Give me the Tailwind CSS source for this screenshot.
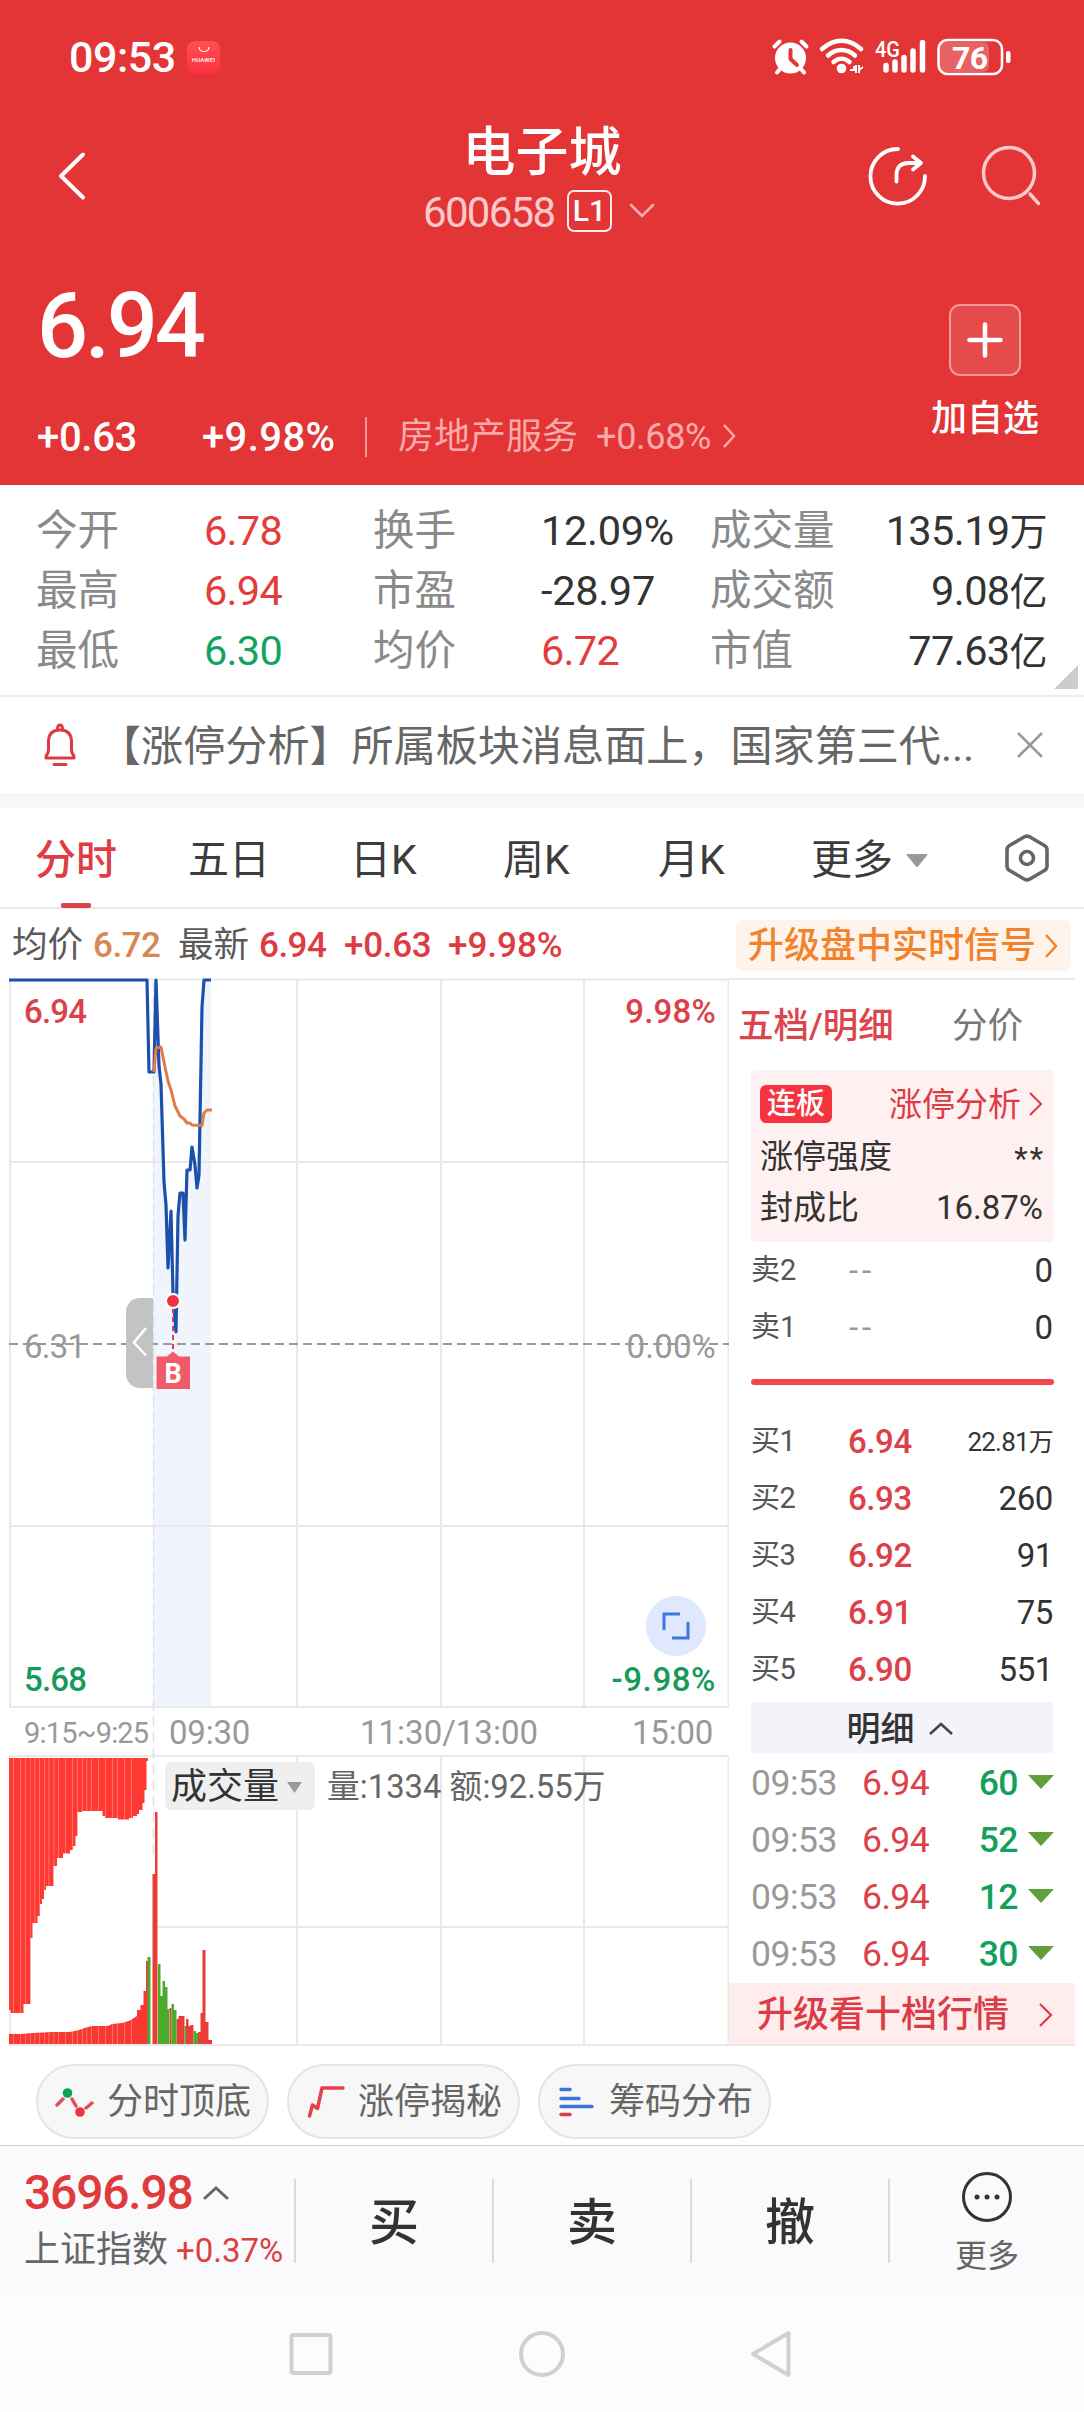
<!DOCTYPE html>
<html lang="zh-CN">
<head>
<meta charset="utf-8">
<title>电子城 600658</title>
<script src="https://cdn.jsdelivr.net/npm/@tailwindcss/browser@4"></script>
</head>
<body class="w-[1084px] h-[2412px] overflow-hidden bg-white leading-none whitespace-nowrap text-[#333] font-['Roboto','Noto_Sans_CJK_SC',sans-serif]">

<!-- Header -->
<header class="h-[485px] bg-[#e33536] text-white flex flex-col">
  <!-- Status bar -->
  <div class="h-[114px] flex items-center pl-[69px] pr-[71px]">
    <span class="text-[43px] tracking-[-0.5px] font-medium w-[118px] pt-[1px]">09:53</span>
    <span class="size-[33px] rounded-[8px] bg-linear-to-b from-[#ff5050] to-[#fb2f43] flex flex-col items-center pt-[5px]">
      <svg width="12" height="7" viewBox="0 0 12 7" fill="none" stroke="#fff" stroke-width="1.2"><path d="M1 1c0 6 10 6 10 0"/></svg>
      <span class="text-[6px] font-medium mt-[4px] tracking-[0.2px]">HUAWEI</span>
    </span>
    <svg class="ml-auto" width="242" height="40" viewBox="0 0 242 40">
      <g transform="translate(2 2)">
        <circle cx="17.500" cy="19" r="15.500" fill="#fff"/>
        <path d="M17.500 11v9l6.500 6" fill="none" stroke="#e33536" stroke-width="4" stroke-linecap="round" stroke-linejoin="round"/>
        <path d="M1.500 7.500l5-5M33.500 7.500l-5-5M7 30l-3 3.500M28 30l3 3.500" stroke="#fff" stroke-width="4" stroke-linecap="round"/>
      </g>
      <g fill="none" stroke="#fff" stroke-width="4.500" stroke-linecap="round">
        <path d="M51 12c12-11 27-11 39 0"/><path d="M57 18.500c8-7.500 19-7.500 27 0"/><path d="M62.500 25c5-4.500 11-4.500 16 0"/>
      </g>
      <circle cx="70.500" cy="31.500" r="4.800" fill="#fff"/>
      <path d="M79 33h4v-4M85 36V28M88 28v8M88 33l4-3" stroke="#fff" stroke-width="2" fill="none"/>
      <text x="104" y="20" font-size="22" font-weight="500" fill="#fff" textLength="25" lengthAdjust="spacingAndGlyphs">4G</text>
      <g stroke="#fff" stroke-width="5.500" stroke-linecap="round"><path d="M115 28.500v4.500M124 25v8M133 20.500v12.500M142 14v19M151.500 5.500v27.500"/></g>
      <rect x="168.500" y="5" width="49.500" height="30" rx="6" fill="#e96263"/>
      <rect x="167.500" y="3" width="63.500" height="34" rx="9" fill="none" stroke="#fff" stroke-width="2.600"/>
      <rect x="235" y="14" width="4.500" height="12" rx="2" fill="#fff"/>
      <text x="181" y="31.500" font-size="32" font-weight="700" fill="#fff" textLength="36">76</text>
    </svg>
  </div>
  <!-- Title bar -->
  <div class="h-[140px] grid grid-cols-[56px_324px_324px_165px_113px_102px]">
    <span></span>
    <svg class="mt-[36px]" width="34" height="52" viewBox="0 0 34 52" fill="none" stroke="#fff" stroke-width="4" stroke-linecap="round" stroke-linejoin="round"><path d="M27 4.500L5 26l22 21.500"/></svg>
    <div class="flex flex-col items-center">
      <h1 class="text-[53px] font-medium mt-[13px]">电子城</h1>
      <div class="flex items-center mt-[10px] h-[42px] -ml-[6px]">
        <span class="text-[42px] text-[#fbc9c9] tracking-[-1.700px] w-[144px] pt-[3px]">600658</span>
        <span class="w-[45px] h-[42px] border-[2.500px] border-white/90 rounded-[7px] flex items-center justify-center text-[30px] font-medium">L1</span>
        <svg class="ml-[17px]" width="26" height="16" viewBox="0 0 26 16" fill="none" stroke="#f7b0b0" stroke-width="2.500" stroke-linecap="round"><path d="M2 2l11 11L24 2"/></svg>
      </div>
    </div>
    <svg class="ml-[164px] mt-[32px]" width="60" height="60" viewBox="0 0 60 60" fill="none" stroke="#fff" stroke-width="3.800" stroke-linecap="round" stroke-linejoin="round"><path d="M30 3A27.300 27.300 0 1 0 57 30M28.500 35.500V29q0-12 12-12h12M45 10.500l8 6.500-8 6.500"/></svg>
    <svg class="ml-[112px] mt-[31px]" width="62" height="62" viewBox="0 0 62 62" fill="none" stroke="#fdc9c9" stroke-width="3.500" stroke-linecap="round"><circle cx="28" cy="28" r="25.500"/><path d="M49 49l8.500 9.500"/></svg>
  </div>
  <!-- Price -->
  <div class="flex flex-1">
    <div class="w-[900px] pl-[37px]">
      <div class="text-[90px] font-medium mt-[28px] tracking-[-3.200px]">6.94</div>
      <div class="flex items-center mt-[45px] h-[40px] text-[40px] font-medium">
        <span class="w-[165px] tracking-[-0.300px] pt-[2px]">+0.63</span>
        <span class="w-[163px] pt-[2px] tracking-[0.400px]">+9.98%</span>
        <span class="w-[2px] h-[40px] bg-[#f19a9a]"></span>
        <span class="ml-[31px] w-[198px] text-[36px] font-normal text-[#f9abab]">房地产服务</span>
        <span class="text-[36px] w-[126px] font-normal text-[#f9abab] tracking-[-0.300px]">+0.68%</span>
        <svg class="-mt-[3px]" width="16" height="26" viewBox="0 0 16 26" fill="none" stroke="#f9abab" stroke-width="2.500"><path d="M2 2l10 11L2 24"/></svg>
      </div>
    </div>
    <div class="w-[170px] flex flex-col items-center pt-[50px]">
      <div class="size-[72px] rounded-[11px] border-2 border-[#f39c9c] bg-[#e64b4c] flex items-center justify-center">
        <svg width="36" height="36" viewBox="0 0 36 36" stroke="#fff" stroke-width="4.500" stroke-linecap="round"><path d="M2.500 18h31M18 2.500v31"/></svg>
      </div>
      <div class="text-[36px] font-medium mt-[25px]">加自选</div>
    </div>
  </div>
</header>

<!-- Key figures -->
<section class="relative h-[210px] pt-[16px] text-[41.500px]">
  <div class="grid grid-cols-[36px_168px_169px_168px_169px_337px] auto-rows-[60px] items-center">
    <span></span><span class="text-[#8a8a8a]">今开</span><span class="tracking-[-0.700px] text-[#e23c3c]">6.78</span><span class="text-[#8a8a8a]">换手</span><span class="tracking-[-0.300px]">12.09%</span><span class="flex justify-between items-baseline text-[#8a8a8a]">成交量<b class="font-normal text-[#333] tracking-[-0.600px]">135.19<i class="not-italic text-[38px]">万</i></b></span>
    <span></span><span class="text-[#8a8a8a]">最高</span><span class="tracking-[-0.700px] text-[#e23c3c]">6.94</span><span class="text-[#8a8a8a]">市盈</span><span class="tracking-[-0.300px]">-28.97</span><span class="flex justify-between items-baseline text-[#8a8a8a]">成交额<b class="font-normal text-[#333] tracking-[-0.600px]">9.08<i class="not-italic text-[38px]">亿</i></b></span>
    <span></span><span class="text-[#8a8a8a]">最低</span><span class="tracking-[-0.700px] text-[#12a35f]">6.30</span><span class="text-[#8a8a8a]">均价</span><span class="tracking-[-0.700px] text-[#e23c3c]">6.72</span><span class="flex justify-between items-baseline text-[#8a8a8a]">市值<b class="font-normal text-[#333] tracking-[-0.600px]">77.63<i class="not-italic text-[38px]">亿</i></b></span>
  </div>
  <svg class="absolute right-[6px] bottom-[6px]" width="24" height="24" viewBox="0 0 24 24"><path d="M24 0v24H0z" fill="#ccc"/></svg>
</section>

<!-- Notice -->
<section class="h-[98px] border-t-2 border-[#ededed] flex items-center">
  <svg class="ml-[43px]" width="34" height="44" viewBox="0 0 34 44" fill="none" stroke="#dc3a46" stroke-width="3" stroke-linecap="round" stroke-linejoin="round"><path d="M3 35V33q2.500-2.500 2.500-7V18Q6 7 17 7t11.500 11v8q0 4.500 2.500 7v2zM14.500 6q0-4 2.500-4t2.500 4M11 41.500h12"/></svg>
  <p class="ml-[22px] w-[918px] text-[42.100px] text-[#666] pt-[5px]">【涨停分析】所属板块消息面上，国家第三代...</p>
  <svg width="26" height="26" viewBox="0 0 26 26" stroke="#999" stroke-width="2.500"><path d="M1 1l24 24M25 1L1 25"/></svg>
</section>
<div class="h-[15px] bg-[#f7f7f7]"></div>

<!-- Period tabs -->
<nav class="h-[101px] border-b-2 border-[#e9e9e9] grid grid-cols-[35px_153px_162px_153px_155px_153px_95px_98px_50px] items-center text-[41px] text-[#3c3c3c] pt-[5px]">
  <span></span>
  <span class="text-[#e03c46] font-medium">分时</span><span>五日</span><span>日K</span><span>周K</span><span>月K</span><span>更多</span>
  <svg class="mt-[1px]" width="22" height="14" viewBox="0 0 22 14"><path d="M1 0h20q1 0 0 1.500l-9 11q-1 1-2 0l-9-11Q0 0 1 0" fill="#999"/></svg>
  <svg class="-mt-[5px]" width="46" height="50" viewBox="0 0 46 50" fill="none" stroke="#666" stroke-width="3.600" stroke-linejoin="round"><path d="M20.500 3.800q2.500-1.400 5 0l15 8.700q2.500 1.500 2.500 4.300v16.400q0 2.800-2.500 4.300l-15 8.700q-2.500 1.400-5 0l-15-8.700Q3 36 3 33.200V16.800q0-2.800 2.500-4.300z"/><circle cx="23" cy="25" r="6.500"/></svg>
</nav>
<div class="h-0 pl-[61px]"><div class="relative -top-[6px] w-[30px] h-[5px] rounded-[2px] bg-[#d8414d]"></div></div>

<!-- Quote line -->
<div class="h-[69px] flex items-center pt-[4px] pl-[12px] pr-[13px] text-[35px] font-medium text-[#dc3c42]">
  <span class="w-[81px] text-[35.500px] font-normal text-[#5a5a5a]">均价</span>
  <span class="w-[85px] text-[#d88754] tracking-[-0.500px]">6.72</span>
  <span class="w-[81px] text-[35.500px] font-normal text-[#5a5a5a]">最新</span>
  <span class="w-[85px] tracking-[-0.500px]">6.94</span><span class="w-[104px] tracking-[-0.300px]">+0.63</span><span>+9.98%</span>
  <span class="ml-auto -mt-[1px] w-[335px] h-[51px] rounded-[8px] bg-[#fff4ec] flex items-center pl-[12px] pt-[1px] text-[36px] text-[#f0832c]">升级盘中实时信号
    <svg class="ml-[8px]" width="15" height="26" viewBox="0 0 15 26" fill="none" stroke="#f0832c" stroke-width="2.500"><path d="M2 2l10 11L2 24"/></svg>
  </span>
</div>

<!-- Chart + order book; origin of the drawing is y=978 of the screen -->
<main class="h-[1068px] flex pl-[9px]">
  <div class="relative w-[720px] h-[1068px]">
    <svg class="block" width="720" height="1068" viewBox="9 978 720 1068">
      <path d="M153 980L154 1072l2-90 3 84 2 18 3 98 2 23 2 63 3-57 2 81 3 40 2-116 2-23h3l2 47 2-70h3l2-23 3 18 2 23 2-13 3-168 2-27h7V1707h-58z" fill="#eff4fd"/>
      <g stroke="#e9e9e9" stroke-width="2" fill="none">
        <path d="M9 979.500h720M9 1162h720M9 1526h720M9 1707h720M9 1756h720M157 1927h572M9 2045h720"/>
        <path d="M10 979v728M297 979v728M441 979v728M584 979v728M728.500 979v728M297 1756v288M441 1756v288M584 1756v288M728.500 1756v288M10 1756v288"/>
      </g>
      <path d="M153.500 980V1860" stroke="#dde1e8" stroke-width="1.500" stroke-dasharray="11 5"/>
      <path d="M9 1344h720" stroke="#999" stroke-width="2" stroke-dasharray="9 5"/>
      <path d="M9 980H147L149 1072h5L156 980 159 1066 161 1084 164 1182 166 1205 168 1268 171 1211 173 1292 176 1332 178 1216 180 1193h3L185 1240 187 1170h3L192 1147 195 1165 197 1188 199 1175 202 1007 204 980h7" fill="none" stroke="#1c50ac" stroke-width="3.200" stroke-linejoin="round"/>
      <path d="M154 1072L156 1048 161 1047 164 1062 168 1081 171 1090 175 1106 180 1116 184 1119 187 1123h3L192 1125 202 1125.500 204 1113 207 1110h5" fill="none" stroke="#e17b47" stroke-width="3" stroke-linejoin="round"/>
      <!-- drawer handle -->
      <path d="M153 1298H140a14 14 0 0 0-14 14v62a14 14 0 0 0 14 14h13z" fill="#c3c3c3"/>
      <path d="M146 1328l-12 14.500 12 13" fill="none" stroke="#fff" stroke-width="2.500"/>
      <!-- buy marker -->
      <path d="M173 1308v41" stroke="#dc3c55" stroke-width="2" stroke-dasharray="5 4"/>
      <circle cx="173" cy="1301" r="7" fill="#f02f43" stroke="#fff" stroke-width="2"/>
      <path d="M156.500 1356.500H167l6-5 6 5h11V1389h-33.500z" fill="#f05b67"/>
      <text x="173" y="1382.500" font-size="27" font-weight="700" fill="#fff" text-anchor="middle">B</text>
      <!-- auction volume -->
      <path d="M9 1758H148V1761H146.500V1790H144.500V1803H142.500V1810H139V1814H137V1816H133V1818H129V1819.500H118V1818H105V1816H102.500V1811H82V1812H77.500V1836H75.500V1846H73V1850H70V1853.500H63V1858H57V1866H53.500V1886H46V1890H44V1899H42V1904H40V1916H37.500V1923H32.500V1938H30.500V2004H23.500V2013H10.500V2010H9z" fill="#ff3832"/>
      <path d="M9 2044V2034H20L33 2033 52 2032 70 2032 79 2030 86 2027.500 92 2026H108L112 2024 122 2023 130 2020.500 137 2016V2010H140.500V2005H143.500V1991H146V1961H148V2044z" fill="#f93832"/>
      <g fill="#fff" opacity=".35">
        <path d="M13 1758h.8v286h-.8zM20 1758h.8v286h-.8zM25 1758h.8v286h-.8zM30 1758h.6v286h-.6zM34.500 1758h.8v286h-.8zM39 1758h.8v286h-.8zM44 1758h.8v286h-.8zM48.500 1758h.8v286h-.8zM53.500 1758h.8v286h-.8zM58 1758h.8v286h-.8zM65 1758h.8v286h-.8zM72 1758h.8v286h-.8zM77 1758h.8v286h-.8zM82 1758h.8v286h-.8zM86.500 1758h.8v286h-.8zM91 1758h.8v286h-.8zM98 1758h.8v286h-.8zM105 1758h.8v286h-.8zM112 1758h.8v286h-.8zM117 1758h.8v286h-.8zM124 1758h.8v286h-.8zM131 1758h.8v286h-.8z"/>
      </g>
      <path d="M152.500 1874h2.500v-62h2.500v232h-5zM169.500 2008h2v36h-2zM176.500 2019h2v-3h6v28h-8zM186 2019h2.500v7h2v-1h3v19H186zM198 2032h2.500v-19h2v-63h3v72h3v18h3.500v4H198z" fill="#e93e38"/>
      <path d="M147.500 1957h3v87h-3zM158 1964h2.500v32h2v-15h2.500v6h2.500v22h1.800v35H158zM171.500 2004h2.500v6h2.500v34h-5zM184.500 2026h1.500v18h-1.500zM193.500 2031h2.500v2h2v11h-4.500z" fill="#4aab2c"/>
    </svg>
    <!-- Labels lying over the plot -->
    <div class="absolute inset-x-0 top-[17px] flex justify-between pl-[15px] pr-[13px] text-[33px] font-medium text-[#dc4048]"><span class="tracking-[-0.800px]">6.94</span><span class="tracking-[0.200px]">9.98%</span></div>
    <div class="absolute inset-x-0 top-[352px] flex justify-between pl-[15px] pr-[13px] text-[33px] text-[#999]"><span class="tracking-[-0.800px]">6.31</span><span class="tracking-[0.200px]">0.00%</span></div>
    <div class="absolute inset-x-0 top-[685px] flex justify-between pl-[15px] pr-[13px] text-[33px] font-medium text-[#159a5c]"><span class="tracking-[-0.800px]">5.68</span><span class="tracking-[0.600px]">-9.98%</span></div>
    <div class="absolute left-[637px] top-[618px] size-[60px] rounded-full bg-[#dfe8fc] flex items-center justify-center">
      <svg width="28" height="28" viewBox="0 0 28 28" fill="none" stroke="#3e76dd" stroke-width="3"><path d="M18 2H2v16M26 10v16H10"/></svg>
    </div>
    <div class="absolute left-0 top-[730px] h-[48px] w-full grid grid-cols-[15px_145px_191px_272px_97px] items-center text-[33px] text-[#999]">
      <span></span><span class="text-[29px] tracking-[-0.800px] pt-[2px]">9:15~9:25</span><span class="tracking-[-0.200px]">09:30</span><span>11:30/13:00</span><span class="tracking-[-0.200px]">15:00</span>
    </div>
    <div class="absolute left-[156px] top-[784px] flex items-center h-[48px]">
      <div class="w-[150px] h-[48px] rounded-[6px] bg-[#efefef] flex items-center pl-[6px] pt-[2px] text-[36px]">成交量
        <svg class="ml-[8px]" width="15" height="11" viewBox="0 0 15 11"><path d="M0 0h15l-7.500 11z" fill="#999"/></svg></div>
      <span class="ml-[12px] pt-[3px] text-[32.800px] text-[#666]">量:1334 额:92.55万</span>
    </div>
  </div>

  <!-- Order book -->
  <aside class="w-[346px] border-t-2 border-b-2 border-[#e9e9e9] flex flex-col">
    <div class="h-[90px] flex items-center pl-[9px] pt-[3px] text-[35.500px]"><span class="w-[214px] text-[#dc454c] font-medium">五档/明细</span><span class="text-[#777]">分价</span></div>
    <div class="ml-[22px] w-[303px] h-[173px] rounded-[5px] bg-[#fff0f1] text-[33px] pl-[9px] pr-[11px] pt-[10px]">
      <div class="flex items-center h-[48px]">
        <span class="w-[72px] h-[38px] rounded-[6px] bg-[#f5343f] text-white text-[29px] font-medium flex items-center justify-center pt-[2px]">连板</span>
        <span class="ml-auto text-[#dc3c46] pt-[2px]">涨停分析</span>
        <svg class="ml-[8px]" width="14" height="26" viewBox="0 0 14 26" fill="none" stroke="#dc3c46" stroke-width="2"><path d="M1 2l11 11L1 24"/></svg>
      </div>
      <div class="flex items-center justify-between h-[54px] pt-[4px]"><span>涨停强度</span><span class="tracking-[2px] text-[31px] pt-[4px] -mr-[2px]">**</span></div>
      <div class="flex items-center justify-between h-[50px] pt-[2px]"><span>封成比</span><span>16.87%</span></div>
    </div>
    <div class="ml-[22px] w-[302px] grid grid-cols-[98px_118px_86px] auto-rows-[57px] items-center text-[33px]">
      <span class="text-[29px] text-[#555]">卖2</span><span class="text-[#999] tracking-[4px]">--</span><span class="text-right">0</span>
      <span class="text-[29px] text-[#555]">卖1</span><span class="text-[#999] tracking-[4px]">--</span><span class="text-right">0</span>
    </div>
    <div class="ml-[22px] w-[303px] h-[6px] mt-[23px] rounded-full bg-[#f5464d]"></div>
    <div class="ml-[22px] mt-[28px] w-[302px] grid grid-cols-[97px_105px_100px] auto-rows-[57px] items-center text-[33px] tracking-[-0.400px]">
      <span class="text-[29px] text-[#555]">买1</span><span class="text-[#dc4048] font-medium">6.94</span><span class="text-right text-[26px] tracking-[-0.800px]">22.81<i class="not-italic text-[25px]">万</i></span>
      <span class="text-[29px] text-[#555]">买2</span><span class="text-[#dc4048] font-medium">6.93</span><span class="text-right">260</span>
      <span class="text-[29px] text-[#555]">买3</span><span class="text-[#dc4048] font-medium">6.92</span><span class="text-right">91</span>
      <span class="text-[29px] text-[#555]">买4</span><span class="text-[#dc4048] font-medium">6.91</span><span class="text-right">75</span>
      <span class="text-[29px] text-[#555]">买5</span><span class="text-[#dc4048] font-medium">6.90</span><span class="text-right">551</span>
    </div>
    <div class="ml-[22px] w-[302px] h-[51px] mt-[4px] bg-[#f3f4f9] flex items-center justify-center text-[34px] pr-[4px] font-medium pt-[3px]">明细
      <svg class="ml-[13px]" width="26" height="14" viewBox="0 0 26 14" fill="none" stroke="#444" stroke-width="2.500"><path d="M2 12L13 2l11 10"/></svg></div>
    <div class="ml-[22px] mt-[2px] w-[303px] grid grid-cols-[111px_156px_36px] auto-rows-[57px] items-center text-[35.500px] tracking-[-0.500px]">
      <span class="text-[#999]">09:53</span><span class="flex justify-between text-[#dc4048]">6.94<b class="font-medium text-[#12a05c]">60</b></span><svg class="ml-[10px] -mt-[4px]" width="26" height="14" viewBox="0 0 26 14"><path d="M0 0h26L13 14z" fill="#5f9f3c"/></svg>
      <span class="text-[#999]">09:53</span><span class="flex justify-between text-[#dc4048]">6.94<b class="font-medium text-[#12a05c]">52</b></span><svg class="ml-[10px] -mt-[4px]" width="26" height="14" viewBox="0 0 26 14"><path d="M0 0h26L13 14z" fill="#5f9f3c"/></svg>
      <span class="text-[#999]">09:53</span><span class="flex justify-between text-[#dc4048]">6.94<b class="font-medium text-[#12a05c]">12</b></span><svg class="ml-[10px] -mt-[4px]" width="26" height="14" viewBox="0 0 26 14"><path d="M0 0h26L13 14z" fill="#5f9f3c"/></svg>
      <span class="text-[#999]">09:53</span><span class="flex justify-between text-[#dc4048]">6.94<b class="font-medium text-[#12a05c]">30</b></span><svg class="ml-[10px] -mt-[4px]" width="26" height="14" viewBox="0 0 26 14"><path d="M0 0h26L13 14z" fill="#5f9f3c"/></svg>
    </div>
    <div class="mt-auto h-[61px] bg-[#ffeced] flex items-center pl-[28px] pr-[22px] justify-between text-[36px] text-[#dc3c46] font-medium pt-[3px]">升级看十档行情
      <svg width="14" height="26" viewBox="0 0 14 26" fill="none" stroke="#dc3c46" stroke-width="2.200"><path d="M1 2l11 11L1 24"/></svg></div>
  </aside>
</main>

<!-- Tool chips -->
<div class="h-[99px] flex gap-[18px] pl-[36px] pt-[18px] text-[36px] text-[#666]">
  <div class="w-[233px] h-[75px] rounded-full border-2 border-[#e4e4e4] bg-[#f7f7f7] flex items-center pl-[16px]">
    <svg width="40" height="34" viewBox="0 0 40 34" stroke="#e0505c" stroke-width="3.500" stroke-linecap="round"><path d="M3 20l6-6M18 14l4 7M32 23l6-5"/><circle cx="13.500" cy="8" r="4.800" fill="#12a05c" stroke="none"/><circle cx="26" cy="27" r="4.800" fill="#ec3346" stroke="none"/></svg>
    <span class="ml-[13px]">分时顶底</span></div>
  <div class="w-[233px] h-[75px] rounded-full border-2 border-[#e4e4e4] bg-[#f7f7f7] flex items-center pl-[18px]">
    <svg width="40" height="34" viewBox="0 0 40 34" fill="none" stroke="#e4414f" stroke-width="3.500" stroke-linecap="round" stroke-linejoin="round"><path d="M2.500 31l3-11 5 3.500L15 3h21"/></svg>
    <span class="ml-[11px]">涨停揭秘</span></div>
  <div class="w-[233px] h-[75px] rounded-full border-2 border-[#e4e4e4] bg-[#f7f7f7] flex items-center pl-[18px]">
    <svg width="40" height="34" viewBox="0 0 40 34" stroke="#3b74dc" stroke-width="3.500" stroke-linecap="round"><path d="M3 4.500h9M3 13.500h18M3 21.500h31"/><path d="M3 29.500h9" stroke="#dc3c4a"/></svg>
    <span class="ml-[11px]">筹码分布</span></div>
</div>

<!-- Bottom trade bar -->
<footer class="h-[150px] border-t border-[#c8c8cc] bg-[#fafafd] grid grid-cols-[294px_198px_198px_198px_196px]">
  <div class="pl-[24px]">
    <div class="flex items-center mt-[23px] text-[48px] font-medium text-[#e03b3b] tracking-[-1.200px]">3696.98
      <svg class="ml-[10px]" width="26" height="16" viewBox="0 0 26 16" fill="none" stroke="#666" stroke-width="3" stroke-linecap="round"><path d="M2 13L13 3l11 10"/></svg></div>
    <div class="flex items-center mt-[15px] text-[36px] text-[#666]"><span class="w-[152px]">上证指数</span><span class="text-[33px] text-[#dc4040]">+0.37%</span></div>
  </div>
  <button class="mt-[33px] h-[84px] border-l-2 border-[#dadadd] text-[50px] font-medium pt-[3px]">买</button>
  <button class="mt-[33px] h-[84px] border-l-2 border-[#dadadd] text-[50px] font-medium pt-[3px]">卖</button>
  <button class="mt-[33px] h-[84px] border-l-2 border-[#dadadd] text-[50px] font-medium pt-[3px]">撤</button>
  <div class="mt-[33px] h-[84px] border-l-2 border-[#dadadd] flex flex-col items-center">
    <svg class="-mt-[8px] shrink-0" width="52" height="52" viewBox="0 0 52 52"><circle cx="26" cy="26" r="23.500" fill="none" stroke="#333" stroke-width="3"/><g fill="#333"><circle cx="16" cy="26" r="2.500"/><circle cx="26" cy="26" r="2.500"/><circle cx="36" cy="26" r="2.500"/></g></svg>
    <span class="text-[32px] text-[#666] mt-[17px]">更多</span>
  </div>
</footer>

<!-- System navigation -->
<div class="h-[117px] bg-[#fcfcfc] grid grid-cols-[288px_230px_230px_1fr] items-center">
  <span></span>
  <svg width="46" height="46" viewBox="0 0 46 46" fill="none" stroke="#d0d0d0" stroke-width="4"><rect x="3.500" y="4" width="39" height="38" rx="2"/></svg>
  <svg width="48" height="48" viewBox="0 0 48 48" fill="none" stroke="#d0d0d0" stroke-width="4"><circle cx="24" cy="24" r="21"/></svg>
  <svg width="46" height="50" viewBox="0 0 46 50" fill="none" stroke="#d0d0d0" stroke-width="4" stroke-linejoin="round"><path d="M40.500 4v42L5 25z"/></svg>
</div>
</body>
</html>
